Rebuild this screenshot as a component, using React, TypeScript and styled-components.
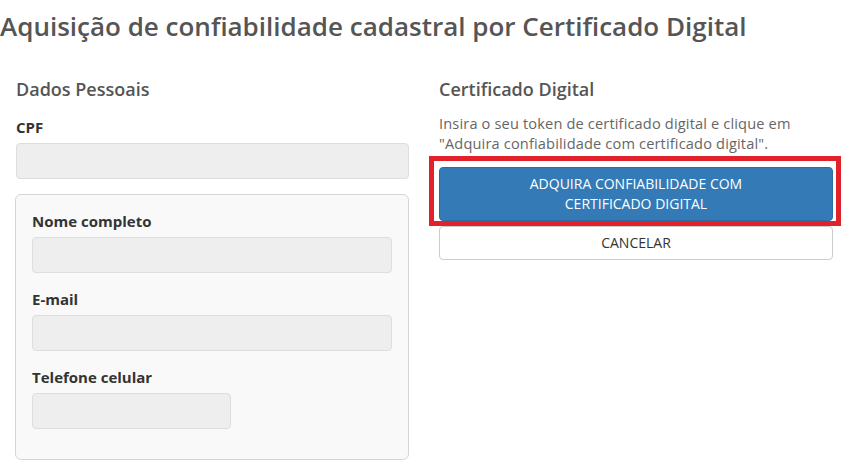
import React from "react";
import styled, { createGlobalStyle } from "styled-components";

const Global = createGlobalStyle`
  html, body { margin: 0; padding: 0; background: #fff; }
  body { font-family: "Open Sans", "Noto Sans", sans-serif; font-size: 14px; line-height: 20px; color: #333; }
  * { box-sizing: border-box; }
`;

const Page = styled.div`
  width: 849px;
`;

const Title = styled.h1`
  margin: 0;
  padding: 8px 0 0 0;
  font-size: 26px;
  line-height: 36px;
  font-weight: 600;
  color: #555;
  white-space: nowrap;
`;

const Row = styled.div`
  display: grid;
  grid-template-columns: 393px 394px;
  column-gap: 30px;
  padding: 33px 16px 0 16px;
`;

const Column = styled.div`
  display: flex;
  flex-direction: column;
`;

const SectionTitle = styled.h2<{ $gap: number }>`
  margin: 0 0 ${(p) => p.$gap}px 0;
  font-size: 18px;
  line-height: 24px;
  font-weight: 600;
  color: #555;
`;

const Group = styled.div<{ $last?: boolean }>`
  display: flex;
  flex-direction: column;
  margin-bottom: ${(p) => (p.$last ? "0" : "16px")};
`;

const Label = styled.label`
  font-size: 15px;
  line-height: 20px;
  font-weight: 700;
  color: #333;
  margin-bottom: 6px;
`;

const Input = styled.div<{ $w?: string }>`
  width: ${(p) => p.$w || "100%"};
  height: 36px;
  background: #eee;
  border: 1px solid #ddd;
  border-radius: 4px;
`;

const Box = styled.div`
  background: #f9f9f9;
  border: 1px solid #d4d4d4;
  border-radius: 6px;
  padding: 16px 16px 31px 16px;
  margin-top: -1px;
  margin-left: -1px;
  height: 266px;
`;

const Text = styled.p`
  margin: 0;
  font-size: 14.6px;
  line-height: 20px;
  letter-spacing: 0.15px;
  color: #666;
`;

const Highlight = styled.div`
  position: relative;
  margin-top: 14px;
`;

const RedFrame = styled.div`
  position: absolute;
  left: -10px;
  right: -8px;
  top: -11px;
  bottom: -5px;
  border: 5px solid #e2222b;
  pointer-events: none;
`;

const Button = styled.button<{ $primary?: boolean }>`
  display: block;
  width: 100%;
  font-family: "Open Sans", "Noto Sans", sans-serif;
  font-size: 14px;
  line-height: 20px;
  text-transform: uppercase;
  text-align: center;
  border-radius: 4px;
  padding: 6px 12px;
  cursor: pointer;
  background: ${(p) => (p.$primary ? "#337ab7" : "#fff")};
  color: ${(p) => (p.$primary ? "#fff" : "#333")};
  border: 1px solid ${(p) => (p.$primary ? "#2e6da4" : "#ccc")};
`;

const Secondary = styled(Button)`
  margin-top: 5px;
`;

export default function App() {
  return (
    <Page>
      <Global />
      <Title>Aquisição de confiabilidade cadastral por Certificado Digital</Title>
      <Row>
        <Column>
          <SectionTitle $gap={16}>Dados Pessoais</SectionTitle>
          <Group>
            <Label>CPF</Label>
            <Input />
          </Group>
          <Box>
            <Group>
              <Label>Nome completo</Label>
              <Input />
            </Group>
            <Group>
              <Label>E-mail</Label>
              <Input />
            </Group>
            <Group $last>
              <Label>Telefone celular</Label>
              <Input $w="199px" />
            </Group>
          </Box>
        </Column>
        <Column>
          <SectionTitle $gap={12}>Certificado Digital</SectionTitle>
          <Text>
            Insira o seu token de certificado digital e clique em "Adquira confiabilidade com certificado digital".
          </Text>
          <Highlight>
            <Button $primary>
              Adquira confiabilidade com
              <br />
              certificado digital
            </Button>
            <RedFrame />
          </Highlight>
          <Secondary>Cancelar</Secondary>
        </Column>
      </Row>
    </Page>
  );
}
